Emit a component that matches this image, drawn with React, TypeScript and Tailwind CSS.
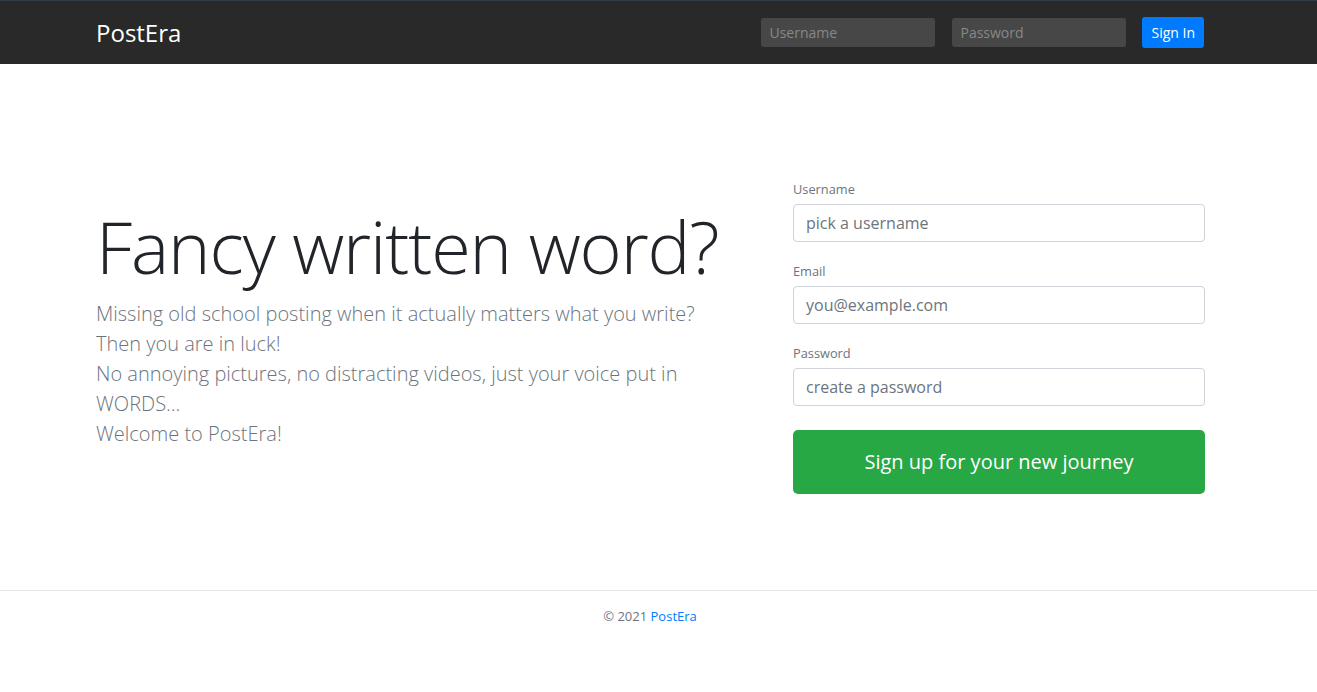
export default function App() {
  const fields = [
    { label: "Username", placeholder: "pick a username", type: "text" },
    { label: "Email", placeholder: "you@example.com", type: "email" },
    { label: "Password", placeholder: "create a password", type: "password" },
  ];

  return (
    <div className="min-h-screen bg-white font-['Open_Sans',sans-serif] text-[#212529]">
      {/* Navbar */}
      <header className="h-16 border-t border-[#2f3d44] bg-[#292929] pr-[15px]">
        <div className="mx-auto flex h-full w-[1140px] items-center justify-between px-[15px]">
          <a href="#" className="text-2xl leading-none text-white">
            PostEra
          </a>
          <form className="mr-[2px] flex items-center">
            <input
              type="text"
              placeholder="Username"
              className="h-[29px] w-[174px] rounded-[3px] bg-[#474747] px-2 text-sm text-white outline-none placeholder:text-[#888]"
            />
            <input
              type="password"
              placeholder="Password"
              className="ml-[17px] h-[29px] w-[174px] rounded-[3px] bg-[#474747] px-2 text-sm text-white outline-none placeholder:text-[#888]"
            />
            <button
              type="button"
              className="ml-4 h-[31px] rounded-[3px] bg-[#007bff] px-[9px] text-sm text-white"
            >
              Sign In
            </button>
          </form>
        </div>
      </header>

      {/* Hero */}
      <main className="pr-[15px] pt-[115px] pb-[96px]">
        <div className="mx-auto flex w-[1140px] justify-between px-[15px]">
          <div className="pt-[24px]">
            <h1 className="mb-[10px] text-[72px] font-light leading-[1.2] tracking-[-1.1px]">
              Fancy written word?
            </h1>
            <p className="w-[620px] text-xl font-light leading-[30px] text-[#6c757d]">
              Missing old school posting when it actually matters what you write?
              <br />
              Then you are in luck!
              <br />
              No annoying pictures, no distracting videos, just your voice put in
              WORDS...
              <br />
              Welcome to PostEra!
            </p>
          </div>

          <form className="mr-px flex w-[412px] flex-col gap-[19px]">
            {fields.map((f) => (
              <div key={f.label} className="flex flex-col">
                <label className="mb-[5px] text-[12.8px] leading-5 text-[#6c757d]">
                  {f.label}
                </label>
                <input
                  type={f.type}
                  placeholder={f.placeholder}
                  className="h-[38px] rounded-[4px] border border-[#ced4da] px-3 text-base text-[#495057] outline-none placeholder:text-[#6c757d]"
                />
              </div>
            ))}
            <button
              type="button"
              className="mt-[5px] h-16 rounded-[5px] bg-[#28a745] text-xl text-white"
            >
              Sign up for your new journey
            </button>
          </form>
        </div>
      </main>

      {/* Footer */}
      <footer className="border-t border-[#e5e5e5] pr-[17px]">
        <p className="pt-[15px] text-center text-[13px] leading-5 text-[#6c757d]">
          © 2021{" "}
          <a href="#" className="text-[#007bff]">
            PostEra
          </a>
        </p>
      </footer>
    </div>
  );
}
